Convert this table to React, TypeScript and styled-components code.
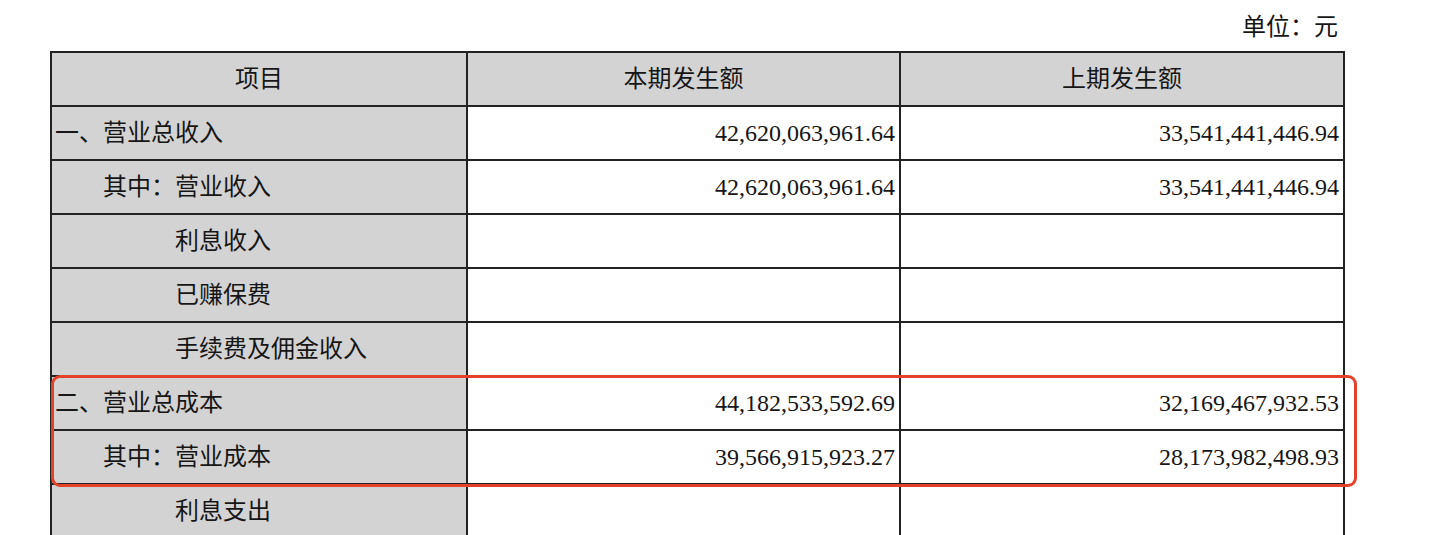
import styled, { createGlobalStyle } from "styled-components"

const GlobalStyle = createGlobalStyle`
  body {
    margin: 0;
    background: #ffffff;
    font-family: "Liberation Serif", "Noto Sans CJK SC", serif;
    color: #161616;
  }
`

const Page = styled.div`
  position: relative;
  width: 1440px;
  height: 535px;
  overflow: hidden;
  padding: 12px 0 0 50px;
  box-sizing: border-box;
`

const Unit = styled.div`
  width: 1288px;
  text-align: right;
  font-size: 24px;
  line-height: 30px;
  height: 39px;
`

const Table = styled.table`
  border-collapse: collapse;
  table-layout: fixed;
  width: 1293px;
  border: 2px solid #333333;
`

const HeadCell = styled.th`
  background: #d3d3d3;
  font-weight: normal;
  font-size: 24px;
  line-height: 28px;
  height: 52px;
  padding: 0;
  text-align: center;
  border: 2px solid #222222;
`

const LabelCell = styled.td<{ $level: number }>`
  background: #d3d3d3;
  font-size: 24px;
  line-height: 28px;
  height: 52px;
  padding: 0 0 0 ${(p) => 3 + p.$level * 24}px;
  text-align: left;
  white-space: nowrap;
  border: 2px solid #222222;
`

const NumberCell = styled.td`
  background: #ffffff;
  font-size: 24px;
  line-height: 28px;
  height: 52px;
  padding: 0 4px 0 0;
  text-align: right;
  border: 2px solid #222222;
`

const Highlight = styled.div`
  position: absolute;
  left: 51px;
  top: 375px;
  width: 1306px;
  height: 112px;
  box-sizing: border-box;
  border: 3px solid #e4412a;
  border-radius: 9px;
  pointer-events: none;
`

const rows: { label: string; level: number; current: string; previous: string }[] = [
  { label: "一、营业总收入", level: 0, current: "42,620,063,961.64", previous: "33,541,441,446.94" },
  { label: "其中：营业收入", level: 2, current: "42,620,063,961.64", previous: "33,541,441,446.94" },
  { label: "利息收入", level: 5, current: "", previous: "" },
  { label: "已赚保费", level: 5, current: "", previous: "" },
  { label: "手续费及佣金收入", level: 5, current: "", previous: "" },
  { label: "二、营业总成本", level: 0, current: "44,182,533,592.69", previous: "32,169,467,932.53" },
  { label: "其中：营业成本", level: 2, current: "39,566,915,923.27", previous: "28,173,982,498.93" },
  { label: "利息支出", level: 5, current: "", previous: "" }
]

const App = () => {
  return (
    <Page>
      <GlobalStyle />
      <Unit>单位：元</Unit>
      <Table>
        <colgroup>
          <col style={{ width: 416 }} />
          <col style={{ width: 433 }} />
          <col style={{ width: 444 }} />
        </colgroup>
        <thead>
          <tr>
            <HeadCell>项目</HeadCell>
            <HeadCell>本期发生额</HeadCell>
            <HeadCell>上期发生额</HeadCell>
          </tr>
        </thead>
        <tbody>
          {rows.map((r) => (
            <tr key={r.label}>
              <LabelCell $level={r.level}>{r.label}</LabelCell>
              <NumberCell>{r.current}</NumberCell>
              <NumberCell>{r.previous}</NumberCell>
            </tr>
          ))}
        </tbody>
      </Table>
      <Highlight />
    </Page>
  )
}

export default App
